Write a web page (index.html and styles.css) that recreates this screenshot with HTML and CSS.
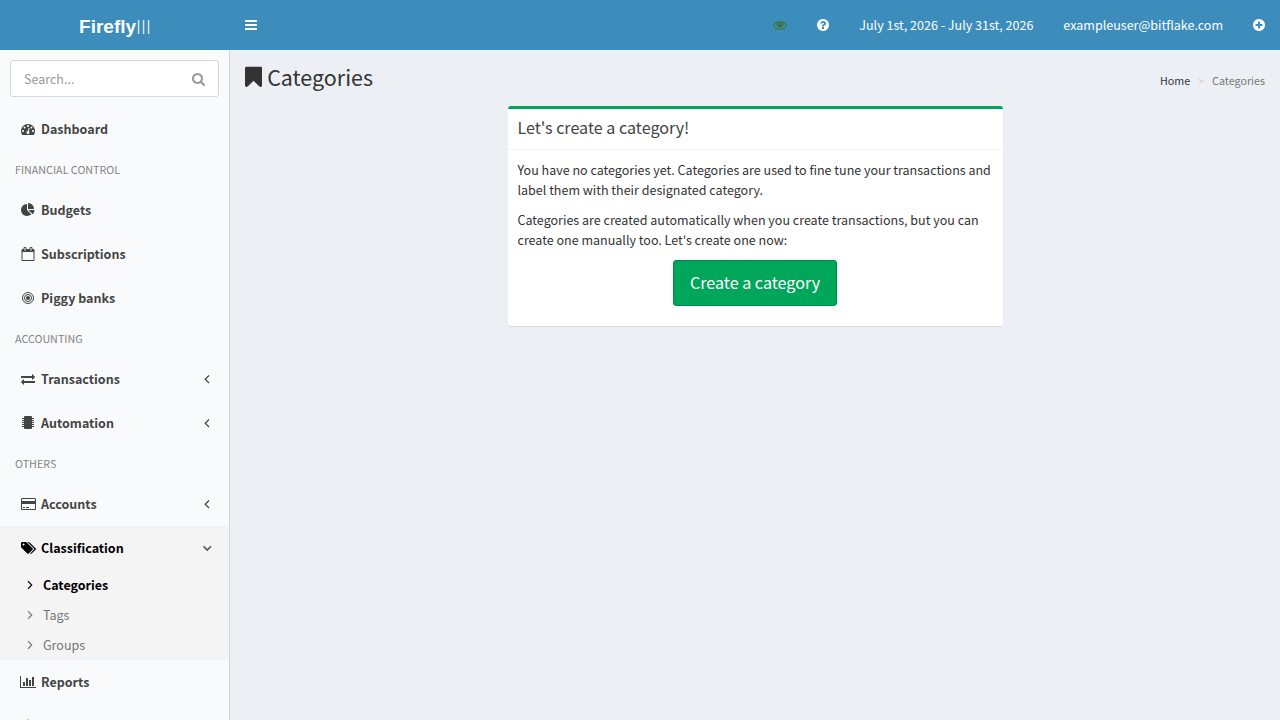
FILE: index.html
```html
<!DOCTYPE html>
<html lang="en">
<head>
<meta charset="utf-8">
<title>Categories - Firefly III</title>
<link rel="stylesheet" href="styles.css">
</head>
<body>
<header class="topbar">
  <a class="logo" href="#"><b>Firefly</b><span class="logo-numeral">III</span></a>
  <nav class="navbar">
    <button class="nav-link" type="button" aria-label="Toggle navigation"><svg class="icon" viewBox="0 0 1536 1792"><path d="M1536 1344v128q0 26-19 45t-45 19H64q-26 0-45-19t-19-45v-128q0-26 19-45t45-19h1408q26 0 45 19t19 45zm0-512v128q0 26-19 45t-45 19H64q-26 0-45-19t-19-45v-128q0-26 19-45t45-19h1408q26 0 45 19t19 45zm0-512v128q0 26-19 45t-45 19H64q-26 0-45-19t-19-45v-128q0-26 19-45t45-19h1408q26 0 45 19t19 45z"/></svg></button>
    <div class="nav-right">
      <a class="nav-link nav-eye" href="#" aria-label="Visibility"><svg class="icon" viewBox="0 0 1792 1792"><path d="M1664 960q-152-236-381-353 61 104 61 225 0 185-131.500 316.500t-316.500 131.500-316.500-131.500-131.500-316.500q0-121 61-225-229 117-381 353 133 205 333.500 326.500t434.500 121.500 434.500-121.500 333.500-326.500zm-720-384q0-20-14-34t-34-14q-125 0-214.500 89.500t-89.500 214.500q0 20 14 34t34 14 34-14 14-34q0-86 61-147t147-61q20 0 34-14t14-34zm848 384q0 34-20 69-140 230-376.500 368.500t-499.500 138.500-499.500-139-376.500-368q-20-35-20-69t20-69q140-229 376.500-368t499.500-139 499.500 139 376.500 368q20 35 20 69z"/></svg></a>
      <a class="nav-link" href="#" aria-label="Help"><svg class="icon" viewBox="128 0 1536 1792"><path d="M1024 1376v-192q0-14-9-23t-23-9h-192q-14 0-23 9t-9 23v192q0 14 9 23t23 9h192q14 0 23-9t9-23zm256-672q0-88-55.500-163t-138.500-116-170-41q-243 0-371 213-15 24 8 42l132 100q7 6 19 6 16 0 25-12 53-68 86-92 34-24 86-24 48 0 85.500 26t37.500 59q0 38-20 61t-68 45q-63 28-115.500 86.500t-52.500 125.500v36q0 14 9 23t23 9h192q14 0 23-9t9-23q0-19 21.500-49.500t54.500-49.500q32-18 49-28.500t46-35 44.500-48 28-60.500 12.500-81zm384 192q0 209-103 385.500t-279.500 279.500-385.500 103-385.500-103-279.500-279.500-103-385.500 103-385.500 279.500-279.500 385.500-103 385.500 103 279.500 279.500 103 385.500z"/></svg></a>
      <a class="nav-link" href="#">July 1st, 2026 - July 31st, 2026</a>
      <a class="nav-link" href="#">exampleuser@bitflake.com</a>
      <a class="nav-link" href="#" aria-label="Create new"><svg class="icon" viewBox="128 0 1536 1792"><path d="M1344 960v-128q0-26-19-45t-45-19h-256v-256q0-26-19-45t-45-19h-128q-26 0-45 19t-19 45v256h-256q-26 0-45 19t-19 45v128q0 26 19 45t45 19h256v256q0 26 19 45t45 19h128q26 0 45-19t19-45v-256h256q26 0 45-19t19-45zm320-64q0 209-103 385.500t-279.500 279.500-385.500 103-385.500-103-279.500-279.500-103-385.500 103-385.500 279.500-279.500 385.500-103 385.500 103 279.500 279.500 103 385.500z"/></svg></a>
    </div>
  </nav>
</header>
<div class="layout">
  <aside class="sidebar">
    <form class="search">
      <input class="search-input" type="text" placeholder="Search..." aria-label="Search">
      <button class="search-button" type="submit" aria-label="Search"><svg class="icon" viewBox="64 128 1664 1792"><path d="M1216 832q0-185-131.500-316.500t-316.500-131.500-316.500 131.500-131.500 316.500 131.500 316.500 316.500 131.500 316.500-131.500 131.500-316.500zm512 832q0 52-38 90t-90 38q-54 0-90-38l-343-342q-179 124-399 124-143 0-273.500-55.500t-225-150-150-225-55.500-273.500 55.500-273.500 150-225 225-150 273.500-55.500 273.500 55.500 225 150 150 225 55.500 273.500q0 220-124 399l343 343q37 37 37 90z"/></svg></button>
    </form>
    <ul class="menu">
      <li><a class="menu-link" href="#"><span class="menu-icon"><svg class="icon" viewBox="0 0 1792 1792"><path d="M384 1152q0-53-37.500-90.500t-90.500-37.500-90.500 37.500-37.500 90.500 37.500 90.500 90.500 37.500 90.500-37.500 37.500-90.500zm192-448q0-53-37.500-90.500t-90.500-37.500-90.500 37.500-37.500 90.500 37.500 90.500 90.500 37.500 90.500-37.500 37.500-90.500zm428 481l101-382q6-26-7.500-48.500t-38.500-29.500-48 6.500-30 39.500l-101 382q-60 5-107 43.500t-63 98.500q-20 77 20 146t117 89 146-20 89-117q16-60-6-117t-72-91zm660-33q0-53-37.500-90.500t-90.500-37.500-90.500 37.500-37.500 90.500 37.500 90.500 90.500 37.500 90.500-37.500 37.500-90.500zm-640-640q0-53-37.500-90.500t-90.500-37.500-90.500 37.500-37.500 90.500 37.500 90.500 90.500 37.500 90.500-37.500 37.500-90.500zm448 192q0-53-37.500-90.500t-90.500-37.500-90.500 37.500-37.500 90.500 37.500 90.500 90.500 37.500 90.500-37.500 37.500-90.500zm320 448q0 261-141 483-19 29-54 29h-1402q-35 0-54-29-141-221-141-483 0-182 71-348t191-286 286-191 348-71 348 71 286 191 191 286 71 348z"/></svg></span>Dashboard</a></li>
      <li class="menu-header">FINANCIAL CONTROL</li>
      <li><a class="menu-link" href="#"><span class="menu-icon"><svg class="icon" viewBox="0 0 1792 1792"><path d="M768 890l546 546q-106 108-247.500 168t-298.500 60q-209 0-385.500-103t-279.500-279.500-103-385.500 103-385.500 279.500-279.500 385.500-103v762zm187 6h773q0 157-60 298.500t-168 247.500zm709-128h-768v-768q209 0 385.500 103t279.500 279.500 103 385.500z"/></svg></span>Budgets</a></li>
      <li><a class="menu-link" href="#"><span class="menu-icon"><svg class="icon" viewBox="0 0 1792 1792"><path d="M192 1664h1408v-1024h-1408v1024zm384-1216v-288q0-14-9-23t-23-9h-64q-14 0-23 9t-9 23v288q0 14 9 23t23 9h64q14 0 23-9t9-23zm768 0v-288q0-14-9-23t-23-9h-64q-14 0-23 9t-9 23v288q0 14 9 23t23 9h64q14 0 23-9t9-23zm384-64v1280q0 52-38 90t-90 38h-1408q-52 0-90-38t-38-90v-1280q0-52 38-90t90-38h128v-96q0-66 47-113t113-47h64q66 0 113 47t47 113v96h384v-96q0-66 47-113t113-47h64q66 0 113 47t47 113v96h128q52 0 90 38t38 90z"/></svg></span>Subscriptions</a></li>
      <li><a class="menu-link" href="#"><span class="menu-icon"><svg class="icon" viewBox="0 0 1792 1792"><circle cx="896" cy="896" r="256"/><g fill="none" stroke="currentColor" stroke-width="128"><circle cx="896" cy="896" r="448"/><circle cx="896" cy="896" r="704"/></g></svg></span>Piggy banks</a></li>
      <li class="menu-header">ACCOUNTING</li>
      <li><a class="menu-link" href="#"><span class="menu-icon"><svg class="icon" viewBox="0 0 1792 1792"><path d="M1792 1184v192q0 13-9.500 22.500t-22.500 9.500h-1376v192q0 13-9.500 22.500t-22.500 9.500q-12 0-24-10l-319-320q-9-9-9-22 0-14 9-23l320-320q9-9 23-9 13 0 22.500 9.500t9.500 22.500v192h1376q13 0 22.500 9.500t9.500 22.500zm0-544q0 14-9 23l-320 320q-9 9-23 9-13 0-22.500-9.500t-9.500-22.500v-192h-1376q-13 0-22.500-9.500t-9.500-22.500v-192q0-13 9.500-22.500t22.500-9.500h1376v-192q0-14 9-23t23-9q12 0 24 10l319 319q9 9 9 23z"/></svg></span>Transactions<svg class="caret" viewBox="0 0 10 14"><path d="M7 3.500 3.200 7.200 7 11"/></svg></a></li>
      <li><a class="menu-link" href="#"><span class="menu-icon"><svg class="icon" viewBox="0 0 14 14"><rect x="3" y="0" width="8" height="13" rx="1"/><path d="M1 2h2v1H1zM1 4h2v1H1zM1 6h2v1H1zM1 8h2v1H1zM1 10h2v1H1zM11 2h2v1h-2zM11 4h2v1h-2zM11 6h2v1h-2zM11 8h2v1h-2zM11 10h2v1h-2z"/></svg></span>Automation<svg class="caret" viewBox="0 0 10 14"><path d="M7 3.500 3.200 7.200 7 11"/></svg></a></li>
      <li class="menu-header">OTHERS</li>
      <li><a class="menu-link" href="#"><span class="menu-icon"><svg class="icon" viewBox="0 0 1920 1792"><path fill-rule="evenodd" d="M160 128h1600q66 0 113 47t47 113v1216q0 66-47 113t-113 47H160q-66 0-113-47t-47-113V288q0-66 47-113t113-47zm0 128q-32 0-32 32v224h1664V288q0-32-32-32zM128 896v608q0 32 32 32h1600q32 0 32-32V896zM256 1280h256v128H256zM640 1280h384v128H640z"/></svg></span>Accounts<svg class="caret" viewBox="0 0 10 14"><path d="M7 3.500 3.200 7.200 7 11"/></svg></a></li>
      <li class="menu-active">
        <a class="menu-link" href="#"><span class="menu-icon"><svg class="icon" viewBox="0 0 1920 1792"><path d="M448 448q0-53-37.500-90.500t-90.500-37.500-90.500 37.500-37.500 90.500 37.500 90.500 90.500 37.500 90.500-37.500 37.500-90.500zm1067 576q0 53-37 90l-491 492q-39 37-91 37-53 0-90-37l-715-716q-38-37-64.500-101t-26.500-117v-416q0-52 38-90t90-38h416q53 0 117 26.500t102 64.500l715 714q37 39 37 91zm384 0q0 53-37 90l-491 492q-39 37-91 37-36 0-59-14t-53-45l470-470q37-37 37-90 0-52-37-91l-715-714q-38-38-102-64.500t-117-26.500h224q53 0 117 26.500t102 64.500l715 714q37 39 37 91z"/></svg></span>Classification<svg class="caret" viewBox="0 0 10 14"><path d="M1.500 5.200 5.200 9 9 5.200"/></svg></a>
        <ul class="submenu">
          <li><a class="submenu-link submenu-current" href="#"><svg class="chevron" viewBox="0 0 10 14"><path d="M3 3.200 6.700 7 3 10.800"/></svg>Categories</a></li>
          <li><a class="submenu-link" href="#"><svg class="chevron" viewBox="0 0 10 14"><path d="M3 3.200 6.700 7 3 10.800"/></svg>Tags</a></li>
          <li><a class="submenu-link" href="#"><svg class="chevron" viewBox="0 0 10 14"><path d="M3 3.200 6.700 7 3 10.800"/></svg>Groups</a></li>
        </ul>
      </li>
      <li><a class="menu-link" href="#"><span class="menu-icon"><svg class="icon" viewBox="0 0 2048 1792"><path d="M640 896v512H384V896zm384-512v1024H768V384zm1024 1152v128H0V128h128v1408zm-640-896v768h-256V640zm384-384v1152h-256V256z"/></svg></span>Reports</a></li>
      <li><a class="menu-link" href="#" aria-label="More"><span class="menu-icon"><svg class="icon" viewBox="0 0 1792 1792"><path d="M832 64h128v128h576l192 192-192 256H256V192h576zM832 704h128v128h640v384H960v576H832v-576H320L128 1024l192-192h512z"/></svg></span></a></li>
    </ul>
  </aside>
  <main class="content">
    <div class="content-header">
      <h1 class="page-title"><svg class="icon" viewBox="256 0 1280 1792"><path d="M1420 128q23 0 44 9 33 13 52.500 41t19.500 62v1289q0 34-19.500 62t-52.500 41q-19 8-44 8-48 0-83-32l-441-424-441 424q-36 33-83 33-23 0-44-9-33-13-52.500-41t-19.500-62v-1289q0-34 19.500-62t52.500-41q21-9 44-9h1048z"/></svg>Categories</h1>
      <nav class="breadcrumb" aria-label="Breadcrumb"><a href="#">Home</a><span class="separator">&gt;</span><span>Categories</span></nav>
    </div>
    <section class="box">
      <h2 class="box-title">Let's create a category!</h2>
      <div class="box-body">
        <p>You have no categories yet. Categories are used to fine tune your transactions and label them with their designated category.</p>
        <p>Categories are created automatically when you create transactions, but you can create one manually too. Let's create one now:</p>
        <div class="box-action"><a class="button" href="#">Create a category</a></div>
      </div>
    </section>
  </main>
</div>
</body>
</html>
```

FILE: styles.css
```css
* { box-sizing: border-box; }

body {
  margin: 0;
  height: 100vh;
  display: flex;
  flex-direction: column;
  overflow: hidden;
  background: #ecf0f5;
  color: #333;
  font-family: "Noto Sans CJK SC", "Open Sans", sans-serif;
  font-size: 14px;
  font-size-adjust: 0.486;
  line-height: 20px;
}

a { color: inherit; text-decoration: none; }
ul { list-style: none; margin: 0; padding: 0; }
input, button { font: inherit; font-size-adjust: inherit; color: inherit; }
.icon { height: 14px; fill: currentColor; flex: none; }

.topbar { display: flex; flex: none; height: 50px; background: #3c8dbc; color: #fff; }
.logo {
  flex: 0 0 230px;
  display: flex;
  justify-content: center;
  padding-top: 2px;
  font: 19px/50px "Liberation Sans", Arial, sans-serif;
  font-size-adjust: none;
}
.logo-numeral { font-family: Lato, sans-serif; font-weight: 300; }
.navbar { flex: 1; display: flex; justify-content: space-between; }
.nav-right { display: flex; }
.nav-link {
  display: flex;
  align-items: center;
  padding: 0 15px;
  border: 0;
  background: none;
}
.nav-eye { color: #3c763d; }

.layout { flex: 1; min-height: 0; display: flex; }
.sidebar {
  flex: 0 0 230px;
  overflow: hidden;
  background: #f9fafc;
  border-right: 1px solid #d2d6de;
}
.search {
  display: flex;
  margin: 10px;
  height: 37px;
  border: 1px solid #d2d6de;
  border-radius: 3px;
  background: #fff;
  color: #999;
}
.search-input {
  flex: 1;
  min-width: 0;
  padding: 0 13px;
  border: 0;
  background: none;
  outline: 0;
}
.search-input::placeholder { color: #999; opacity: 1; }
.search-button {
  display: flex;
  align-items: center;
  padding: 2px 13px 0;
  border: 0;
  background: none;
}

.menu-link {
  display: flex;
  align-items: center;
  padding: 12px 17px 12px 18px;
  color: #444;
  font-weight: 700;
}
.menu-icon {
  display: flex;
  align-items: center;
  justify-content: center;
  width: 20px;
  height: 20px;
  margin-right: 3px;
}
.menu-header { padding: 10px 15px; color: #848484; font-size: 12px; line-height: 17px; }
.caret, .chevron { width: 10px; height: 14px; fill: none; stroke: currentColor; stroke-width: 1.2; }
.caret { margin-left: auto; }
.menu-active { background: #f4f4f5; }
.menu-active .menu-link { color: #000; }
.menu-active .caret { stroke: #555; stroke-width: 1.6; }
.submenu-link {
  display: flex;
  align-items: center;
  gap: 8px;
  padding: 5px 5px 5px 25px;
  color: #777;
}
.submenu-current { color: #000; font-weight: 700; }

.content { flex: 1; padding: 15px; }
.content-header { display: flex; justify-content: space-between; align-items: flex-start; }
.page-title {
  display: flex;
  align-items: center;
  gap: 5px;
  margin: 0;
  font-size: 24px;
  font-weight: 400;
  line-height: 24px;
}
.page-title .icon { height: 24px; }
.breadcrumb { display: flex; gap: 8px; padding-top: 6px; color: #777; font-size: 12px; }
.breadcrumb a { color: #333; }
.separator { color: #ccc; }

.box {
  width: calc(50% - 15px);
  margin: 15px auto 0;
  border-top: 3px solid #00a65a;
  border-radius: 3px;
  background: #fff;
  box-shadow: 0 1px 1px rgba(0, 0, 0, 0.1);
}
.box-title {
  margin: 0;
  padding: 8px 10px 12px;
  border-bottom: 1px solid #f4f4f4;
  color: #444;
  font-size: 18px;
  font-weight: 400;
  line-height: 20px;
}
.box-body { padding: 10px 10px 20px; }
.box-body p { margin: 0 0 10px; }
.box-action { display: flex; justify-content: center; }
.button {
  padding: 9px 16px 11px;
  border: 1px solid #008d4c;
  border-radius: 3px;
  background: #00a65a;
  color: #fff;
  font-size: 18px;
  line-height: 24px;
}
```
